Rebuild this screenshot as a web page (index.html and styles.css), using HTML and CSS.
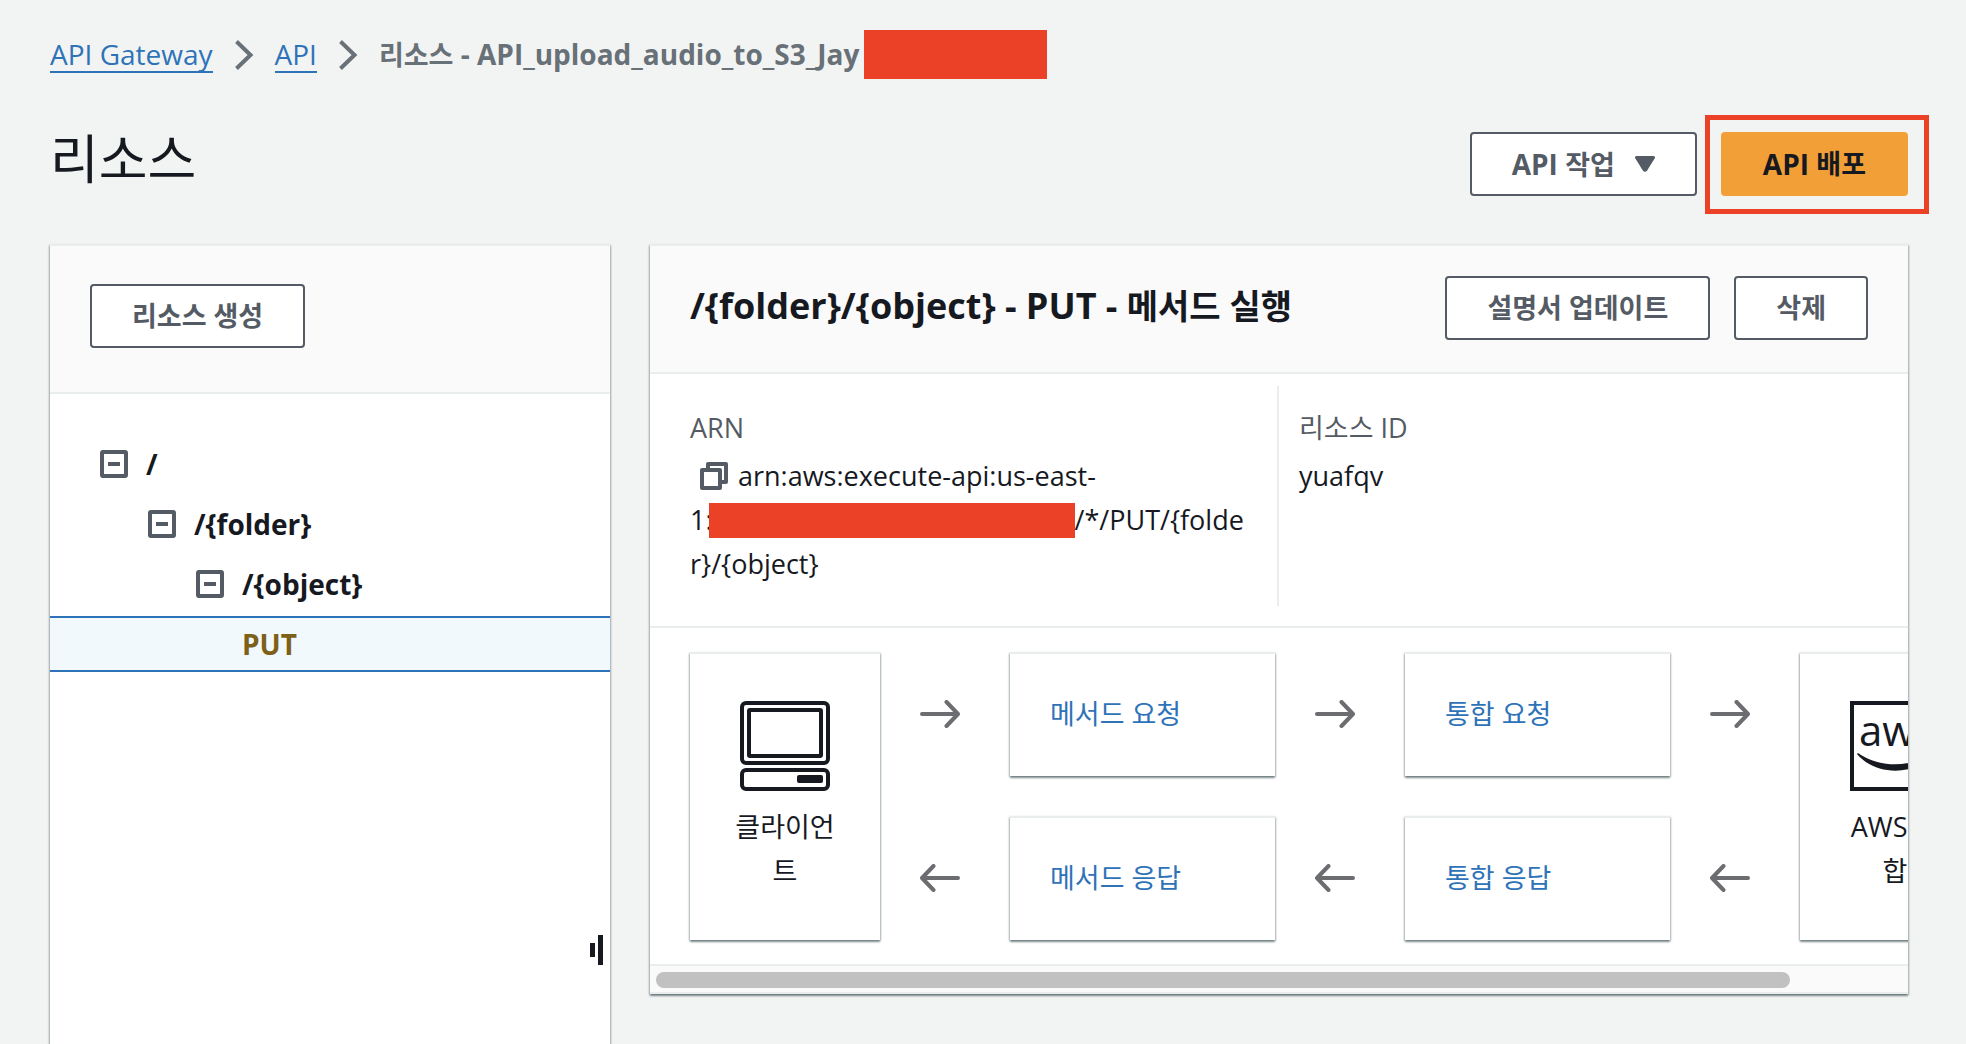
FILE: index.html
```html
<!DOCTYPE html>
<html lang="ko">
<head>
<meta charset="utf-8">
<meta name="viewport" content="width=device-width, initial-scale=1">
<title>API Gateway - 리소스</title>
<link rel="stylesheet" href="styles.css">
</head>
<body>
<svg class="sprite" aria-hidden="true">
  <symbol id="chevron" viewBox="0 0 20 30"><path d="M2.500 1.500 16.500 15 2.500 28.500" fill="none" stroke="currentColor" stroke-width="4"/></symbol>
  <symbol id="collapse" viewBox="0 0 28 28"><rect x="2" y="2" width="24" height="24" rx="1" fill="none" stroke="currentColor" stroke-width="4"/><path d="M8 14h12" stroke="currentColor" stroke-width="4"/></symbol>
  <symbol id="arrow" viewBox="0 0 40 28"><path d="M2 14h35M26.500 2 38 14 26.500 26" fill="none" stroke="currentColor" stroke-width="4" stroke-linecap="round" stroke-linejoin="round"/></symbol>
</svg>

<nav class="breadcrumb" aria-label="탐색 경로">
  <a href="#">API Gateway</a>
  <svg class="chevron"><use href="#chevron"/></svg>
  <a href="#">API</a>
  <svg class="chevron"><use href="#chevron"/></svg>
  <span class="current"><span class="ko">리소스</span> - API_upload_audio_to_S3_Jay</span>
  <span class="redacted redacted-name"></span>
</nav>

<header class="page-header">
  <h1>리소스</h1>
  <div class="actions">
    <button class="btn btn-menu" type="button"><span>API <span class="ko">작업</span></span>
      <svg class="caret" viewBox="0 0 20 16"><path d="M1.500 0h17a1.500 1.500 0 0 1 1.300 2.200L12 14.800a2.400 2.400 0 0 1-4 0L.2 2.200A1.500 1.500 0 0 1 1.500 0z" fill="currentColor"/></svg>
    </button>
    <div class="highlighted"><button class="btn btn-primary" type="button">API <span class="ko">배포</span></button></div>
  </div>
</header>

<main class="layout">
  <section class="panel resources">
    <div class="panel-header"><button class="btn" type="button"><span class="ko">리소스 생성</span></button></div>
    <ul class="tree">
      <li class="level-1"><button type="button" aria-label="접기"><svg><use href="#collapse"/></svg></button><span>/</span></li>
      <li class="level-2"><button type="button" aria-label="접기"><svg><use href="#collapse"/></svg></button><span>/{folder}</span></li>
      <li class="level-3"><button type="button" aria-label="접기"><svg><use href="#collapse"/></svg></button><span>/{object}</span></li>
      <li class="level-4 selected"><span>PUT</span></li>
    </ul>
    <div class="resize-handle" role="separator"><i></i><i></i></div>
  </section>

  <section class="panel method">
    <div class="panel-header">
      <h2>/{folder}/{object} - PUT - <span class="ko">메서드 실행</span></h2>
      <div class="panel-actions">
        <button class="btn" type="button"><span class="ko">설명서 업데이트</span></button>
        <button class="btn" type="button"><span class="ko">삭제</span></button>
      </div>
    </div>

    <dl class="details">
      <div>
        <dt>ARN</dt>
        <dd><button class="copy" type="button" aria-label="복사"><svg viewBox="0 0 28 28"><path d="M8 8V2h18v18h-6M2 8h18v18H2z" fill="none" stroke="currentColor" stroke-width="4" stroke-linejoin="round"/></svg></button>arn:aws:execute-api:us-east-<br>1:<span class="redacted redacted-arn"></span>/*/PUT/{folde<br>r}/{object}</dd>
      </div>
      <div>
        <dt>리소스 ID</dt>
        <dd>yuafqv</dd>
      </div>
    </dl>

    <div class="diagram">
      <div class="card endpoint">
        <svg viewBox="0 0 90 90" fill="none" stroke="currentColor" stroke-width="4"><rect x="2" y="2" width="86" height="60" rx="4"/><rect x="9" y="9" width="72" height="46" rx="1"/><rect x="2" y="69" width="86" height="19" rx="4"/><rect x="57" y="74" width="26" height="8" rx="2" fill="currentColor" stroke="none"/></svg>
        <span>클라이언트</span>
      </div>
      <div class="arrows"><svg><use href="#arrow"/></svg><svg class="back"><use href="#arrow"/></svg></div>
      <div class="steps"><a class="card" href="#">메서드 요청</a><a class="card" href="#">메서드 응답</a></div>
      <div class="arrows"><svg><use href="#arrow"/></svg><svg class="back"><use href="#arrow"/></svg></div>
      <div class="steps"><a class="card" href="#">통합 요청</a><a class="card" href="#">통합 응답</a></div>
      <div class="arrows"><svg><use href="#arrow"/></svg><svg class="back"><use href="#arrow"/></svg></div>
      <div class="card endpoint">
        <svg viewBox="0 0 90 90"><rect x="2" y="2" width="86" height="86" fill="none" stroke="currentColor" stroke-width="4"/><text x="9" y="45" class="logo-text">aws</text><path d="M8 52C28 66 56 67 77 55l3 4C56 75 24 73 7 53z" fill="currentColor"/></svg>
        <span>AWS 통합</span>
      </div>
    </div>
    <div class="scrollbar"><div class="thumb"></div></div>
  </section>
</main>
</body>
</html>
```

FILE: styles.css
```css
* { box-sizing: border-box; }

:root {
  --ink: #16191f;
  --muted: #545b64;
  --line: #eaeded;
  --link: #2e73b8;
  --red: #eb4127;
}

body {
  display: flex;
  flex-direction: column;
  height: 100vh;
  margin: 0;
  padding: 30px 58px 0 50px;
  overflow: hidden;
  background: #f2f4f3;
  color: var(--ink);
  font: 27px/44px "Open Sans", "Noto Sans CJK KR", sans-serif;
}

.sprite { position: absolute; width: 0; height: 0; }
.ko { font-size: 27px; }
button { font: inherit; color: inherit; cursor: pointer; }
.redacted { background: var(--red); }

/* Breadcrumb */
.breadcrumb { display: flex; align-items: center; height: 49px; font-size: 28px; white-space: nowrap; }
.breadcrumb a {
  height: 37px;
  border-bottom: 2px solid var(--link);
  color: var(--link);
  line-height: 36px;
  text-decoration: none;
}
.chevron { width: 20px; height: 30px; margin: 0 21px; color: #687078; }
.current { color: #687078; font-weight: 700; }
.redacted-name { width: 183px; height: 49px; margin-left: 5px; }

/* Page header */
.page-header { display: flex; justify-content: space-between; align-items: flex-start; margin: 53px 0 48px; }
h1 { margin: 0; font-size: 53px; font-weight: 400; line-height: 54px; }
.actions, .panel-actions { display: flex; gap: 24px; }

.btn {
  display: inline-flex;
  align-items: center;
  justify-content: center;
  height: 64px;
  padding: 0 40px;
  border: 2px solid var(--muted);
  border-radius: 4px;
  background: #fff;
  color: var(--muted);
  font-size: 28px;
  font-weight: 700;
  white-space: pre;
}
.btn-menu { gap: 20px; }
.btn-primary { border-color: #f29f38; background: #f29f38; color: var(--ink); }
.caret { width: 20px; height: 16px; }
.highlighted { position: relative; display: flex; }
.highlighted::after {
  position: absolute;
  inset: -17px -21px -18px -16px;
  border: 5px solid var(--red);
  content: "";
  pointer-events: none;
}

/* Panels */
.layout { display: flex; flex: 1; align-items: flex-start; gap: 40px; min-height: 0; }
.panel, .card {
  border-top: 2px solid var(--line);
  background: #fff;
  box-shadow: 0 2px 2px rgba(0, 28, 36, .4), 1px 1px 2px rgba(0, 28, 36, .2), -1px 1px 2px rgba(0, 28, 36, .2);
}
.panel-header { border-bottom: 2px solid var(--line); background: #fafafa; }

.resources { position: relative; flex: 0 0 560px; align-self: stretch; }
.resources .panel-header { padding: 38px 40px 44px; }
.resources .btn { vertical-align: top; }
.tree { display: flex; flex-direction: column; gap: 4px; margin: 42px 0 0; padding: 0; font-size: 28px; font-weight: 700; list-style: none; }
.tree li { display: flex; align-items: center; gap: 18px; height: 56px; }
.tree button { display: flex; padding: 0; border: 0; background: none; color: var(--muted); }
.tree svg { width: 28px; height: 28px; }
.level-1 { padding-left: 50px; }
.level-2 { padding-left: 98px; }
.level-3 { padding-left: 146px; }
.level-4 { padding-left: 192px; }
.tree .selected { border: solid #2e73b8; border-width: 2px 0; background: #f1f9fc; color: #7d6118; }
.resize-handle { position: absolute; top: 689px; right: 7px; display: flex; align-items: center; gap: 3px; cursor: col-resize; }
.resize-handle i { width: 5px; height: 30px; background: var(--ink); }
.resize-handle i:first-child { height: 14px; }

.method { flex: 1; min-width: 0; }
.method .panel-header { display: flex; justify-content: space-between; padding: 30px 40px 32px; }
h2 { margin: 0; font-size: 36px; font-weight: 700; line-height: 60px; white-space: nowrap; }
h2 .ko { font-size: 34px; }

/* Details */
.details { display: grid; grid-template-columns: 1fr 1fr; margin: 0; padding: 12px 0 20px; }
.details > div { height: 220px; padding: 20px 0 0 20px; }
.details > div:first-child { padding-left: 40px; border-right: 2px solid var(--line); }
dt { color: var(--muted); }
dd { margin: 4px 0 0; }
.copy { width: 28px; height: 28px; margin: 0 10px; padding: 0; border: 0; background: none; color: var(--muted); vertical-align: -4px; }
.copy svg { display: block; }
.redacted-arn { display: inline-block; width: 366px; height: 35px; margin-left: -4px; vertical-align: -8px; }

/* Request and response flow */
.diagram { display: flex; padding: 24px 40px; border-top: 2px solid var(--line); overflow: hidden; }
.diagram > * { flex: none; }
.endpoint { display: flex; flex-direction: column; align-items: center; gap: 14px; width: 190px; height: 288px; padding: 47px 40px 0; text-align: center; word-break: break-all; }
.endpoint svg { flex: none; width: 90px; height: 90px; }
.logo-text { font-size: 42px; fill: currentColor; }
.arrows { display: flex; flex-direction: column; gap: 136px; padding: 48px 50px 0 40px; color: #6b6d70; }
.arrows svg { width: 40px; height: 28px; }
.back { transform: rotate(180deg); }
.steps { display: flex; flex-direction: column; gap: 40px; width: 265px; }
.steps .card { display: flex; align-items: center; height: 124px; padding: 0 40px 2px; color: var(--link); text-decoration: none; }

.scrollbar { padding: 6px 6px 4px; border: solid var(--line); border-width: 2px 0; background: #fafafa; }
.thumb { width: 91%; height: 16px; border-radius: 8px; background: #c1c1c1; }
```
